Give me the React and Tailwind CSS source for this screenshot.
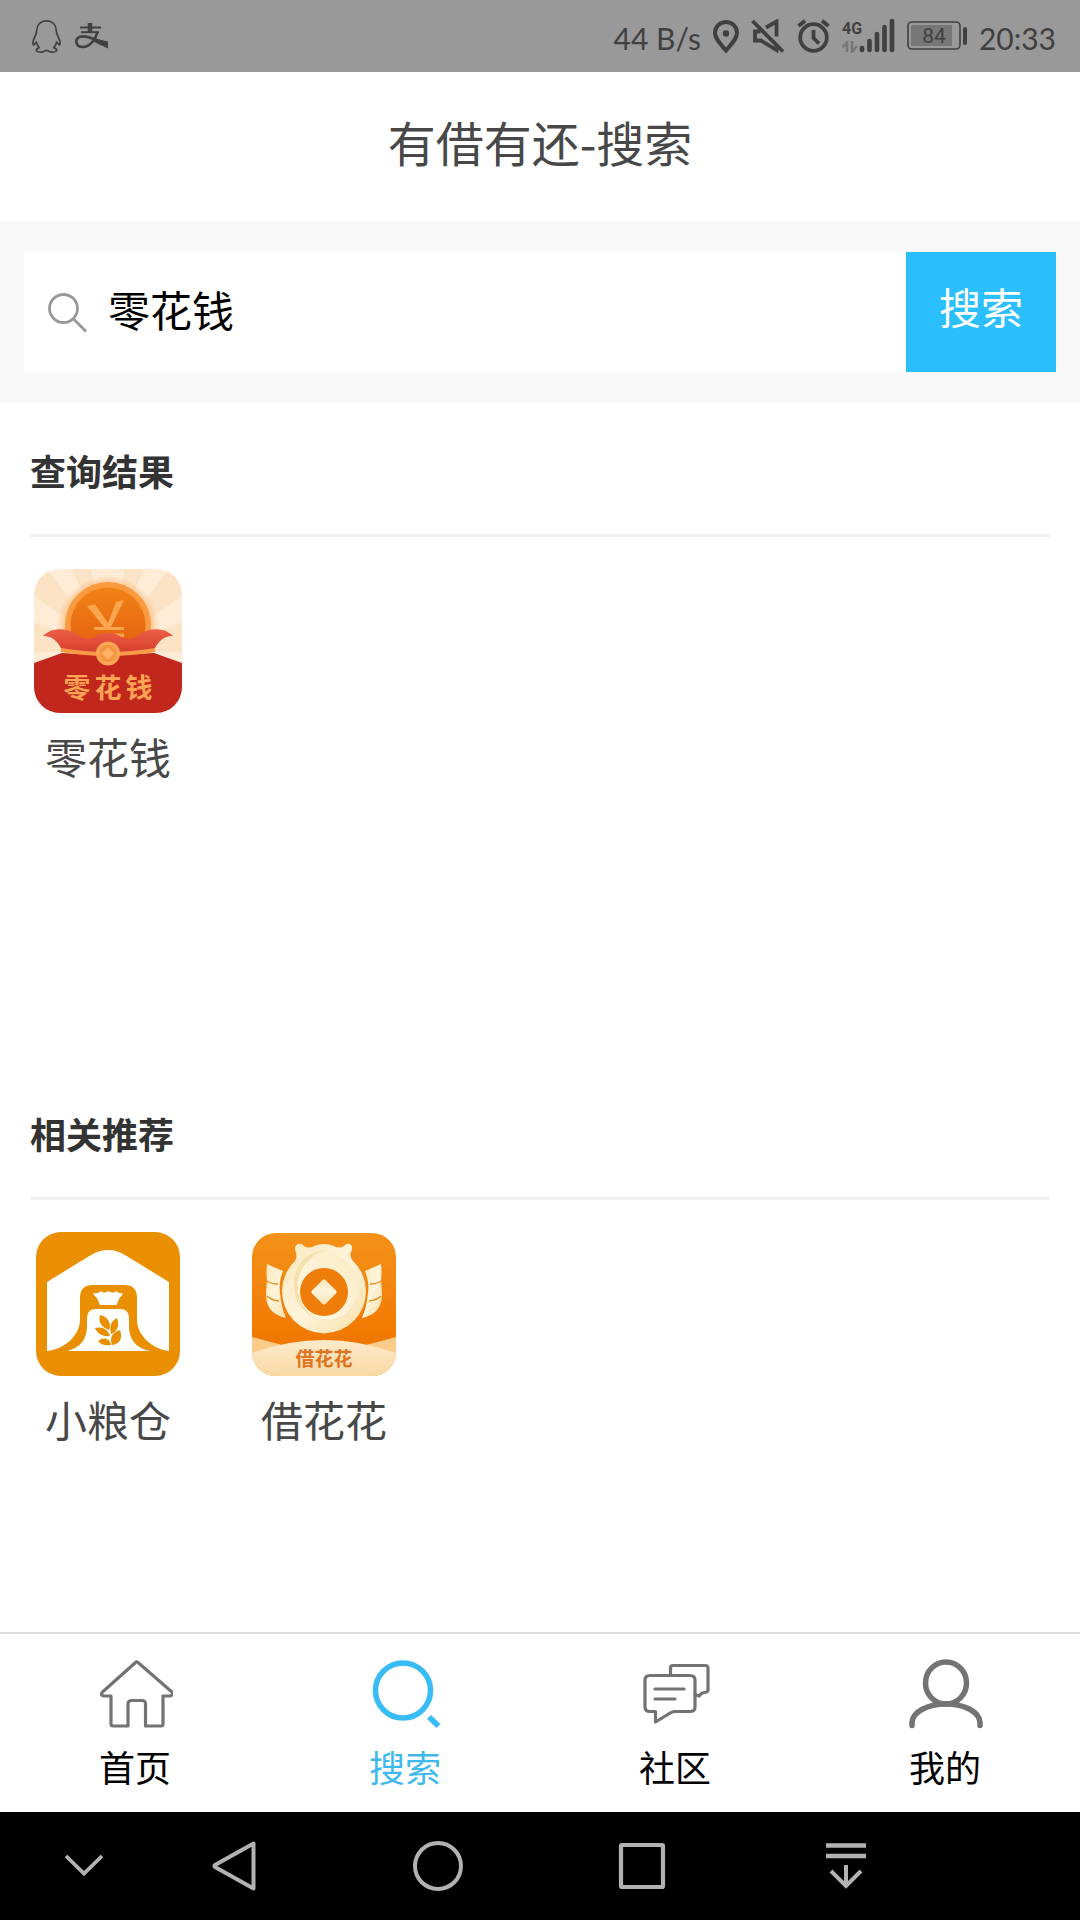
function StatusBar() {
  return (
    <div className="flex h-[72px] items-center justify-between bg-[#999999] pl-8 pr-6 text-[#404040]">
      <div className="flex items-center gap-[14px]">
        <svg width="29" height="33" viewBox="0 0 29 33" fill="none" stroke="currentColor" strokeWidth="1.7" strokeLinejoin="round">
          <path d="M14.500 .9C8.500 .9 5 5 4.700 10.500C4.600 15 1.200 18.500 .9 22.500C.8 25 1.600 25.500 2.600 24L4.300 22C5 24.500 5.700 26 7.200 27.600C5.500 28.200 4 29.500 4.500 31C6 32.400 11.500 32.500 13 30.800C14 30.300 15 30.300 16 30.800C17.500 32.500 23 32.400 24.500 31C25 29.500 23.500 28.200 21.800 27.600C23.300 26 24 24.500 24.700 22L26.400 24C27.400 25.500 28.200 25 28.100 22.500C27.800 18.500 24.400 15 24.300 10.500C24 5 20.500 .9 14.500 .9Z" />
        </svg>
        <svg width="33" height="26" viewBox="0 0 33 26" fill="none" stroke="currentColor">
          <path d="M5 4.500H26" strokeWidth="2" />
          <path d="M15 0V9" strokeWidth="4.500" />
          <path d="M6 9.200H24" strokeWidth="2" />
          <path d="M22.500 9C20.500 16 15.500 24 7.500 24C3.500 24 1.300 22 1.300 18.800C1.300 15.500 4 13.400 8 13.400C14 13.400 20 16.500 32.500 21.500" strokeWidth="2.600" />
          <path d="M18 15L33 18.500V25.500L17 18Z" fill="currentColor" stroke="none" />
        </svg>
      </div>

      <div className="flex items-center gap-3 font-['Lato',sans-serif] text-[30px]">
        <span className="pt-1 leading-8">44 B/s</span>
        <svg width="26" height="33" viewBox="0 0 26 33" fill="none" stroke="currentColor" strokeWidth="4">
          <path d="M13 30.500C8 24.500 2 19 2 12.800A11 10.800 0 0 1 24 12.800C24 19 18 24.500 13 30.500Z" />
          <circle cx="13" cy="13.500" r="3.200" fill="currentColor" stroke="none" />
        </svg>
        <svg width="34" height="34" viewBox="0 0 34 34" fill="none" stroke="currentColor" strokeWidth="3.800">
          <path d="M1.500 2L32 32.500" />
          <path d="M9.500 12.500H4V21.500H10L25.500 31V25" />
          <path d="M15 8.500L25.500 2.500V17.500" />
        </svg>
        <svg width="33" height="34" viewBox="0 0 33 34" fill="none" stroke="currentColor" strokeWidth="3.800">
          <circle cx="16.500" cy="18.500" r="13.300" />
          <path d="M16.500 11V19L22 24.500M1.500 7L8 1.800M31.500 7L25 1.800" />
        </svg>
        <svg width="53" height="34" viewBox="0 0 53 34">
          <text x="0" y="15" fontFamily="Roboto, sans-serif" fontSize="16" fontWeight="700" fill="currentColor">4G</text>
          <path d="M5 33V24L0 28.500M5 33V22M10 22V33L15 27" fill="none" stroke="#777777" strokeWidth="2.600" />
          <path d="M20 29V31M27.500 22V31M35 15V31M42.500 8V31M50 2V31" stroke="currentColor" strokeWidth="4.600" strokeLinecap="round" />
        </svg>
        <svg width="60" height="30" viewBox="0 0 60 30">
          <rect x="1" y="1" width="52" height="27" rx="4" fill="none" stroke="currentColor" strokeWidth="1.600" />
          <rect x="4" y="4" width="41" height="21" rx="1" fill="#777777" />
          <text x="27" y="22" textAnchor="middle" fontFamily="Roboto, sans-serif" fontSize="21" fontWeight="400" fill="currentColor">84</text>
          <path d="M58 8V22" stroke="currentColor" strokeWidth="4" strokeLinecap="round" />
        </svg>
        <span className="pt-1 leading-8">20:33</span>
      </div>
    </div>
  );
}

function PocketMoneyIcon() {
  return (
    <svg className="h-[144px] w-[148px]" viewBox="0 0 148 144" aria-hidden="true">
      <defs>
        <clipPath id="pocketClip">
          <rect width="148" height="144" rx="26" />
        </clipPath>
        <linearGradient id="pocketCoin" x1="0" y1="0" x2="0" y2="1">
          <stop offset="0" stopColor="#f08416" />
          <stop offset="1" stopColor="#e2570f" />
        </linearGradient>
        <linearGradient id="pocketFlap" x1="0" y1="0" x2="0" y2="1">
          <stop offset="0" stopColor="#ee5f45" />
          <stop offset="1" stopColor="#d23b2c" />
        </linearGradient>
        <radialGradient id="pocketGlow" cx="74" cy="58" r="56" gradientUnits="userSpaceOnUse">
          <stop offset=".7" stopColor="#f8bb80" />
          <stop offset=".92" stopColor="#f8bb80" stopOpacity="0" />
        </radialGradient>
      </defs>
      <g clipPath="url(#pocketClip)">
        <rect width="148" height="144" fill="#feecd6" />
        <path
          fill="#fde3c5"
          d="M74 80L-4 24L10 -4ZM74 80L36 -4H56ZM74 80L92 -4H112ZM74 80L138 -4L152 24ZM74 80L-4 52V84ZM74 80L152 52V84Z"
        />
        <circle cx="74" cy="58" r="56" fill="url(#pocketGlow)" />
        <circle cx="74" cy="56" r="43" fill="#fc9a3f" />
        <circle cx="74" cy="56" r="37.500" fill="url(#pocketCoin)" />
        <path d="M53 37L61 35.500L74 54L82 33L90 31L77 58H90V61H60V58H70Z" fill="#fba54e" />
        <path d="M80 64.500H90V68H76Z" fill="#fba54e" />
        <path
          fill="url(#pocketFlap)"
          d="M9 67C18 58 33 59 42 65C50 71 56 71 62 67C69 63 79 63 86 67C92 71 98 71 106 65C115 59 130 58 139 67C129 67 124 73 120 81L74 86L28 81C24 73 19 67 9 67Z"
        />
        <path fill="#c1271d" d="M0 94L28 84L74 87L120 84L148 94V144H0Z" />
        <path d="M27 81Q74 89 121 81" fill="none" stroke="#f99a48" strokeWidth="4" />
        <circle cx="74" cy="84.500" r="12" fill="#fca555" />
        <circle cx="74" cy="84.500" r="8.500" fill="#f39340" />
        <rect x="69.500" y="80" width="9" height="9" rx="1" fill="#ffb264" transform="rotate(45 74 84.500)" />
        <text y="129" textAnchor="middle" fontFamily="Noto Sans CJK SC, sans-serif" fontSize="27" fontWeight="700" fill="#ffa554">
          <tspan x="43">零</tspan>
          <tspan x="74">花</tspan>
          <tspan x="105">钱</tspan>
        </text>
      </g>
    </svg>
  );
}

function GranaryIcon() {
  return (
    <svg className="size-[144px]" viewBox="0 0 144 144" aria-hidden="true">
      <rect width="144" height="144" rx="25" fill="#ea9000" />
      <path
        fill="#ffffff"
        d="M11 50L55 23Q72 13 89 23L133 50V119C116 117 101 103 101 88V66Q101 53 88 53H57Q44 53 44 66V88C44 103 29 117 11 119Z"
      />
      <path
        fill="#ffffff"
        d="M57 61Q62 62 65 59Q68 62 72.500 59Q77 62 80 59Q83 62 87 61Q86 64 83.500 66L80.500 73H64L61 66Q58 64 57 61ZM31 119C45 116 51 106 51 94V86Q51 77 60 77H84Q93 77 93 86V94C93 106 99 116 114 119Z"
      />
      <g fill="#ea9000">
        <path d="M64 83C71 84 76 91 73 98C65 95 62 90 64 83Z" />
        <path d="M81 86C84 93 81 100 75 102C73 94 75 89 81 86Z" />
        <path d="M59 96C66 94 72 97 74 104C66 105 61 101 59 96Z" />
        <path d="M62 109C68 104 74 107 75 113C69 114 65 113 62 109Z" />
        <path d="M84 98C87 106 84 112 76 113C73 105 77 100 84 98Z" />
      </g>
    </svg>
  );
}

function FlowerLoanIcon() {
  return (
    <svg className="size-[144px]" viewBox="0 0 144 144" aria-hidden="true">
      <defs>
        <clipPath id="flowerClip">
          <rect y="1" width="144" height="143" rx="24" />
        </clipPath>
        <linearGradient id="flowerBg" x1="0" y1="0" x2="0" y2="1">
          <stop offset="0" stopColor="#f4921a" />
          <stop offset=".75" stopColor="#f17800" />
        </linearGradient>
        <linearGradient id="flowerCream" x1="0" y1="0" x2="1" y2="1">
          <stop offset="0" stopColor="#fbe8bd" />
          <stop offset=".5" stopColor="#fdf4da" />
          <stop offset="1" stopColor="#f8dfab" />
        </linearGradient>
        <linearGradient id="flowerSwirl" x1="1" y1="0" x2="0" y2="1">
          <stop offset="0" stopColor="#fbeac2" />
          <stop offset="1" stopColor="#fffbed" />
        </linearGradient>
        <linearGradient id="flowerHill" x1="0" y1="0" x2="0" y2="1">
          <stop offset="0" stopColor="#fdebcb" />
          <stop offset="1" stopColor="#f8d9a4" />
        </linearGradient>
      </defs>
      <g clipPath="url(#flowerClip)">
        <rect width="144" height="144" fill="url(#flowerBg)" />
        <path d="M0 105Q22 111 42 116H102Q122 111 144 105V144H0Z" fill="#fbcb8a" />
        <path d="M0 121Q36 108 72 108T144 121V144H0Z" fill="url(#flowerHill)" />
        <g fill="url(#flowerCream)">
          <path d="M15 32L31 39C28 47 27 53 28 61Q29 74 34 86Q15 82 14 64Q14 58 15 49Q14 41 15 32Z" />
          <path d="M129 32L113 39C116 47 117 53 116 61Q115 74 110 86Q129 82 130 64Q130 58 129 49Q130 41 129 32Z" />
          <path d="M43 18C42 11 50 10 52 14Q57 17 62 14Q72 10 82 14Q87 17 92 14C96 9 103 13 99 20Q97 24 101 29A42 42 0 1 1 43 29Q46 24 43 18Z" />
        </g>
        <path d="M15 49Q19 52 26 52M15 64Q19 68 27 69M129 49Q125 52 118 52M129 64Q125 68 117 69" fill="none" stroke="#ed8b1d" strokeWidth="1.300" />
        <path d="M46 51C49 32 62 20 76 18C57 18 43 32 42 48C40 66 50 82 66 86C54 80 45 67 46 51Z" fill="#f6e1ae" />
        <path d="M46 55C46 34 60 20 80 22C103 26 112 54 101 72C93 88 76 90 64 85C52 80 46 68 46 55Z" fill="url(#flowerSwirl)" />
        <circle cx="72" cy="60" r="24" fill="#ef7d0a" />
        <rect x="62.500" y="50.500" width="19" height="19" rx="2" fill="url(#flowerCream)" transform="rotate(45 72 60)" />
        <text x="72" y="134" textAnchor="middle" fontFamily="Noto Sans CJK SC, sans-serif" fontSize="19" fontWeight="700" fill="#df7322">
          借花花
        </text>
      </g>
    </svg>
  );
}

const tabs = [
  {
    label: "首页",
    icon: (
      <path
        d="M38.500 4.500Q39.500 3.500 41 4.500L75 34Q77 37 73 38H66V66Q66 68 64 68H48.500V45Q48 42.500 45 42.500H35Q31.500 42.500 31 45V68H16Q14 68 14 66V38H6.500Q3 37 5.500 34Z"
        strokeWidth="3.200"
      />
    ),
  },
  {
    label: "搜索",
    active: true,
    icon: (
      <>
        <circle cx="36" cy="32.500" r="27.500" strokeWidth="5.500" />
        <path d="M62 59L71.500 68" strokeWidth="5.800" />
      </>
    ),
  },
  {
    label: "社区",
    icon: (
      <>
        <path d="M13 17.500H53Q58 17.500 58 22V49Q58 53.500 53 53.500H37Q33 54.500 30 57L18.500 64V53.500H13Q8 53.500 8 49V22Q8 17.500 13 17.500Z" strokeWidth="3.200" />
        <path d="M33.500 17V9.500Q33.500 7.500 36 7.500H68Q71 7.500 71 10V32Q71 34.500 67 34.500Q64 35 62 38L58 36.500M18 31H47M18 41H38" strokeWidth="3.200" strokeLinecap="round" />
      </>
    ),
  },
  {
    label: "我的",
    icon: (
      <>
        <ellipse cx="39" cy="25" rx="20.500" ry="21" strokeWidth="5.500" />
        <path d="M5 67.500V64C6 54 20 46 39 46S72 54 73 64V67.500" strokeWidth="5.500" strokeLinecap="round" />
      </>
    ),
  },
];

function AppTile({ name, icon }) {
  return (
    <a href="#" className="flex flex-col items-center gap-[11px] text-[42px] leading-[64px] text-[#484848]">
      {icon}
      <span>{name}</span>
    </a>
  );
}

function Section({ title, className, children }) {
  return (
    <section className={className}>
      <h2 className="mx-[30px] border-b-[3px] border-[#f0f0f0] pb-9 pt-10 text-[36px] font-bold leading-[56px] text-[#333333]">
        {title}
      </h2>
      <div className="grid grid-cols-5 pt-8">{children}</div>
    </section>
  );
}

export default function App() {
  return (
    <div className="flex min-h-screen flex-col bg-white font-['Noto_Sans_CJK_SC',sans-serif]">
      <StatusBar />

      <header className="flex h-[150px] items-center justify-center pb-3">
        <h1 className="text-[48px] leading-[72px] text-[#484848]">有借有还-搜索</h1>
      </header>

      {/* Search bar */}
      <form className="flex bg-[#f8f8f8] px-6 py-[30px]" onSubmit={(e) => e.preventDefault()}>
        <label className="flex h-[120px] min-w-0 flex-1 items-center gap-5 bg-white pl-6">
          <svg width="40" height="42" viewBox="0 -2 40 42" fill="none" stroke="#999999" strokeWidth="2.800" aria-hidden="true">
            <circle cx="15.500" cy="15.500" r="14" />
            <path d="M25.500 26L38 38.500" />
          </svg>
          <input
            type="text"
            aria-label="搜索"
            defaultValue="零花钱"
            className="h-full min-w-0 flex-1 bg-transparent pb-2 text-[42px] text-black outline-none"
          />
        </label>
        <button type="submit" className="h-[120px] w-[150px] bg-[#2cbfff] pb-[14px] text-[42px] text-white">
          搜索
        </button>
      </form>

      <main className="flex flex-1 flex-col">
        <Section title="查询结果" className="min-h-[663px]">
          <AppTile name="零花钱" icon={<PocketMoneyIcon />} />
        </Section>
        <Section title="相关推荐" className="flex-1">
          <AppTile name="小粮仓" icon={<GranaryIcon />} />
          <AppTile name="借花花" icon={<FlowerLoanIcon />} />
        </Section>
      </main>

      {/* Tab bar */}
      <nav className="grid h-[180px] grid-cols-4 border-t-2 border-[#dddddd] pt-6 text-[36px] leading-[56px]">
        {tabs.map((tab) => (
          <a
            key={tab.label}
            href="#"
            className={tab.active ? "flex flex-col items-center gap-1 text-[#3fb8ee]" : "flex flex-col items-center gap-1 text-black"}
          >
            <svg
              className={tab.active ? "size-[76px] text-[#38bcf8]" : "size-[76px] text-[#737373]"}
              viewBox="0 0 76 76"
              fill="none"
              stroke="currentColor"
              strokeLinejoin="round"
              aria-hidden="true"
            >
              {tab.icon}
            </svg>
            <span>{tab.label}</span>
          </a>
        ))}
      </nav>

      {/* System navigation */}
      <div className="flex h-[108px] items-center bg-black pl-9 pr-[132px] text-[#b2b2b2]">
        <button type="button" aria-label="收起" className="flex w-24 justify-center">
          <svg width="52" height="52" viewBox="0 0 52 52" fill="none" stroke="currentColor" strokeWidth="3.800">
            <path d="M8 16L26 33.500L44 16" />
          </svg>
        </button>
        <button type="button" aria-label="返回" className="flex flex-1 justify-center">
          <svg width="52" height="52" viewBox="0 0 52 52" fill="none" stroke="currentColor" strokeWidth="4" strokeLinejoin="round">
            <path d="M45.500 3.500V48.500L7 27Q6 26 7 25Z" />
          </svg>
        </button>
        <button type="button" aria-label="主页" className="flex flex-1 justify-center">
          <svg width="52" height="52" viewBox="0 0 52 52" fill="none" stroke="currentColor" strokeWidth="4">
            <circle cx="26" cy="26" r="23" />
          </svg>
        </button>
        <button type="button" aria-label="最近任务" className="flex flex-1 justify-center">
          <svg width="52" height="52" viewBox="0 0 52 52" fill="none" stroke="currentColor" strokeWidth="4.200" strokeLinejoin="round">
            <rect x="5" y="5" width="42" height="42" rx="1" />
          </svg>
        </button>
        <button type="button" aria-label="通知栏" className="flex flex-1 justify-center">
          <svg width="52" height="52" viewBox="0 0 52 52" fill="none" stroke="currentColor" strokeWidth="4.400">
            <path d="M6 5.500H46M6 16H46" />
            <path d="M26 25V46M11 31L26 46L41 31" strokeWidth="4" />
          </svg>
        </button>
      </div>
    </div>
  );
}
